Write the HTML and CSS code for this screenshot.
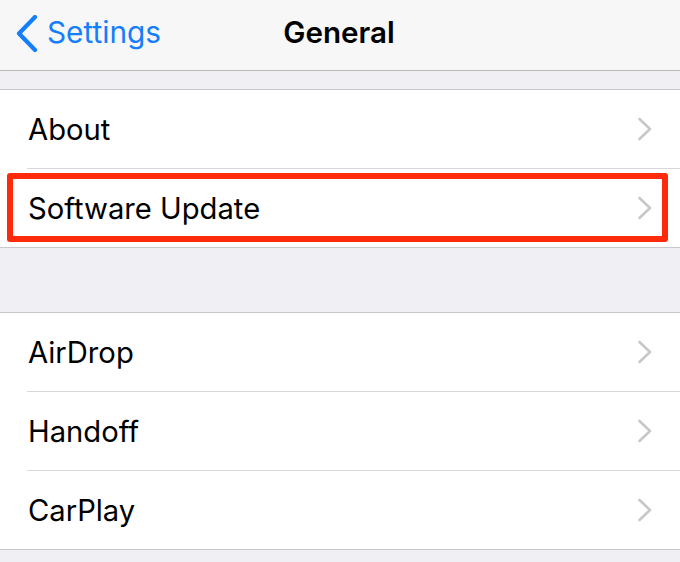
FILE: index.html
```html
<!DOCTYPE html>
<html>
<head>
<meta charset="utf-8">
<link rel="stylesheet" href="styles.css">
</head>
<body>
<div class="screen">
  <header class="nav">
    <a class="back">
      <svg class="back-icon" width="24" height="38" viewBox="0 0 24 38"><path d="M20 2 L4 18.5 L20 35" fill="none" stroke="#157efb" stroke-width="4.2" stroke-linecap="round" stroke-linejoin="round"/></svg>
      <span>Settings</span>
    </a>
    <h1 class="title">General</h1>
  </header>
  <div class="gap gap-top"></div>
  <ul class="group">
    <li class="row"><span class="label">About</span><svg class="chev" width="16" height="24" viewBox="0 0 16 24"><path d="M2.5 2 L13 12 L2.5 22" fill="none" stroke="#c7c7cc" stroke-width="2.6" stroke-linecap="round" stroke-linejoin="round"/></svg></li>
    <li class="row highlighted"><span class="label">Software Update</span><svg class="chev" width="16" height="24" viewBox="0 0 16 24"><path d="M2.5 2 L13 12 L2.5 22" fill="none" stroke="#c7c7cc" stroke-width="2.6" stroke-linecap="round" stroke-linejoin="round"/></svg></li>
  </ul>
  <div class="gap gap-mid"></div>
  <ul class="group">
    <li class="row"><span class="label">AirDrop</span><svg class="chev" width="16" height="24" viewBox="0 0 16 24"><path d="M2.5 2 L13 12 L2.5 22" fill="none" stroke="#c7c7cc" stroke-width="2.6" stroke-linecap="round" stroke-linejoin="round"/></svg></li>
    <li class="row"><span class="label">Handoff</span><svg class="chev" width="16" height="24" viewBox="0 0 16 24"><path d="M2.5 2 L13 12 L2.5 22" fill="none" stroke="#c7c7cc" stroke-width="2.6" stroke-linecap="round" stroke-linejoin="round"/></svg></li>
    <li class="row"><span class="label">CarPlay</span><svg class="chev" width="16" height="24" viewBox="0 0 16 24"><path d="M2.5 2 L13 12 L2.5 22" fill="none" stroke="#c7c7cc" stroke-width="2.6" stroke-linecap="round" stroke-linejoin="round"/></svg></li>
  </ul>
  <div class="gap gap-bottom"></div>
</div>
</body>
</html>
```
FILE: styles.css
```css
html, body {
  margin: 0;
  padding: 0;
  background: #efeff4;
}
.screen {
  width: 680px;
  height: 562px;
  overflow: hidden;
  font-family: "Inter", "Liberation Sans", sans-serif;
  background: #efeff4;
}
.nav {
  box-sizing: border-box;
  height: 71px;
  padding-bottom: 7px;
  background: #f7f7f7;
  border-bottom: 1px solid #b8b8b8;
  display: grid;
  grid-template-columns: 1fr auto 1fr;
  align-items: center;
}
.back {
  display: flex;
  align-items: center;
  gap: 8px;
  padding-left: 15px;
  color: #157efb;
  font-size: 29.8px;
  font-weight: 400;
}
.back-icon {
  display: block;
  margin-top: 4px;
}
.title {
  margin: 0;
  font-size: 29.6px;
  font-weight: 600;
  color: #000;
  transform: translateX(-1px);
}
.gap-top {
  height: 18px;
}
.gap-mid {
  height: 64px;
}
.gap-bottom {
  height: 20px;
}
.group {
  list-style: none;
  margin: 0;
  padding: 0;
  background: #fff;
  border-top: 1px solid #c8c7cc;
  border-bottom: 1px solid #c8c7cc;
}
.row {
  position: relative;
  height: 78px;
  display: flex;
  align-items: center;
  justify-content: space-between;
  padding: 0 28px 0 28px;
  font-size: 29.2px;
  color: #000;
}
.row + .row {
  margin-top: 1px;
}
.row + .row::before {
  content: "";
  position: absolute;
  left: 27px;
  right: 0;
  top: -1px;
  height: 1px;
  background: #d8d8dc;
}
.chev {
  display: block;
  margin-right: -1px;
}
.highlighted::after {
  content: "";
  position: absolute;
  left: 7px;
  right: 12px;
  top: 4px;
  bottom: 5px;
  border: 6px solid #fd2a0c;
  border-radius: 3px;
  pointer-events: none;
}
```
